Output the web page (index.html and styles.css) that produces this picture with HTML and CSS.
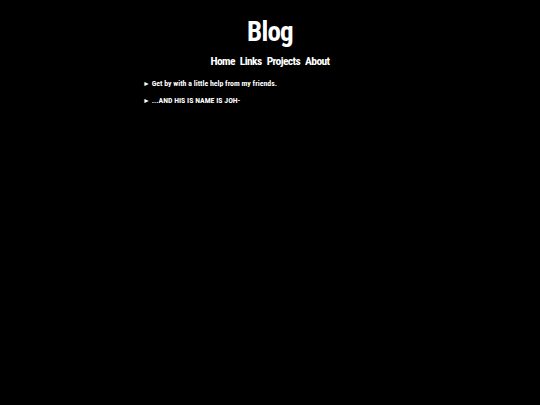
FILE: index.html
```html
<!DOCTYPE html>
<html>
<head>
<meta charset="utf-8">
<link rel="stylesheet" href="styles.css">
</head>
<body>
<header class="site-header">
  <h1 class="title">Blog</h1>
  <nav class="nav">
    <a href="#">Home</a>
    <a href="#">Links</a>
    <a href="#">Projects</a>
    <a href="#">About</a>
  </nav>
</header>
<ul class="posts">
  <li><span class="arrow">►</span> Get by with a little help from my friends.</li>
  <li><span class="arrow">►</span> ...AND HIS IS NAME IS JOH-</li>
</ul>
</body>
</html>
```
FILE: styles.css
```css
html, body {
  margin: 0;
  padding: 0;
  background: #000;
  color: #fff;
  font-family: "Roboto Condensed", Roboto, "Liberation Sans", sans-serif;
  font-stretch: condensed;
  font-weight: bold;
}
.site-header {
  display: flex;
  flex-direction: column;
  align-items: center;
  padding-top: 16px;
}
.title {
  margin: 0;
  font-size: 27px;
  line-height: 32px;
  letter-spacing: -0.8px;
}
.nav {
  display: flex;
  gap: 5px;
  margin-top: 6px;
  font-size: 11.5px;
  letter-spacing: -0.6px;
}
.nav a {
  color: #fff;
  text-decoration: none;
}
.posts {
  list-style: none;
  margin: 11px 0 0 143px;
  padding: 0;
  font-size: 7.8px;
  line-height: 10px;
  letter-spacing: 0;
}
.posts li {
  margin-bottom: 6.5px;
}
.arrow {
  font-size: 7px;
}
```
